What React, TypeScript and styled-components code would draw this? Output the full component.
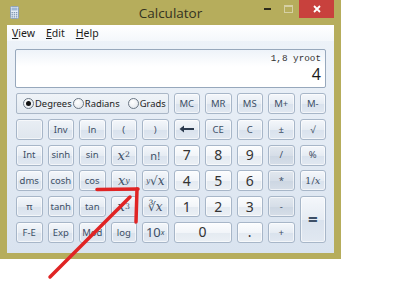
import React from 'react';
import styled, { createGlobalStyle, css } from 'styled-components';

const Global = createGlobalStyle`
  html, body { margin: 0; padding: 0; background: #ffffff; }
  body { width: 403px; height: 300px; overflow: hidden; font-family: "Noto Sans", "Open Sans", sans-serif; }
  * { box-sizing: border-box; }
`;

const Page = styled.div`
  position: relative;
  width: 403px;
  height: 300px;
  background: #ffffff;
`;

const Window = styled.div`
  width: 341px;
  height: 259px;
  background: #b6ad5c;
  display: flex;
  flex-direction: column;
  padding: 0 7px 6px 7px;
`;

const TitleBar = styled.div`
  height: 25px;
  display: grid;
  grid-template-columns: 1fr auto 1fr;
  align-items: center;
`;

const TitleIcon = styled.div`
  display: flex;
  align-items: center;
  padding-left: 3px;
`;

const TitleText = styled.div`
  font-family: "Open Sans", "Noto Sans", sans-serif;
  font-size: 13.5px;
  color: #34321f;
`;

const Controls = styled.div`
  align-self: start;
  display: flex;
  justify-content: flex-end;
  height: 18px;
`;

const CtrlBox = styled.div<{ $w: number; $danger?: boolean }>`
  width: ${p => p.$w}px;
  height: 18px;
  display: flex;
  align-items: center;
  justify-content: center;
  background: ${p => (p.$danger ? '#c8413d' : 'transparent')};
`;

const Client = styled.div`
  flex: 1;
  display: flex;
  flex-direction: column;
  background: linear-gradient(#eef3f9, #d9e3ef);
`;

const MenuBar = styled.div`
  height: 16px;
  display: flex;
  align-items: center;
  gap: 11px;
  padding-left: 5px;
  background: linear-gradient(#ffffff, #f4f7fb);
`;

const MenuItem = styled.span`
  font-family: "Noto Sans", sans-serif;
  font-size: 10.5px;
  color: #1b1b1b;
  u { text-decoration: underline; text-underline-offset: 1px; }
`;

const Body = styled.div`
  flex: 1;
  display: flex;
  flex-direction: column;
  padding: 8px 8px 10px 8px;
`;

const Display = styled.div`
  height: 39px;
  border: 1px solid #97a8bc;
  border-radius: 2px;
  background: linear-gradient(#eef3f9, #ffffff 45%);
  display: flex;
  flex-direction: column;
  align-items: flex-end;
  padding: 4px 4px 0 0;
`;

const Expr = styled.div`
  font-family: "Liberation Mono", "DejaVu Sans Mono", monospace;
  font-size: 9.3px;
  line-height: 10px;
  color: #333;
`;

const Value = styled.div`
  font-family: "Open Sans", "Noto Sans", sans-serif;
  font-size: 16px;
  line-height: 20px;
  color: #1a1a1a;
`;

const Keypad = styled.div`
  margin: 5px 0 0 1px;
  display: grid;
  grid-template-columns: repeat(10, 1fr);
  grid-template-rows: repeat(6, 21px);
  column-gap: 5px;
  row-gap: 4.8px;
`;

const RadioGroup = styled.div`
  grid-column: 1 / span 5;
  border: 1px solid #aab7c7;
  border-radius: 2px;
  background: linear-gradient(#f0f4f8, #e2e9f1);
  display: flex;
  align-items: center;
  padding-left: 6px;
`;

const RadioItem = styled.label<{ $w: number }>`
  width: ${p => p.$w}px;
  display: flex;
  align-items: center;
  gap: 1px;
  font-family: "Noto Sans", sans-serif;
  font-size: 9.4px;
  color: #222;
`;

const RadioDot = styled.span<{ $on?: boolean }>`
  width: 11px;
  height: 11px;
  border-radius: 50%;
  border: 1px solid #6b7785;
  background: radial-gradient(circle at 40% 35%, #ffffff, #dfe4ea);
  display: flex;
  align-items: center;
  justify-content: center;
  &::after {
    content: '';
    width: 5px;
    height: 5px;
    border-radius: 50%;
    background: ${p => (p.$on ? '#111' : 'transparent')};
  }
`;

type Variant = 'fn' | 'num' | 'op' | 'blank';

const variantStyle = {
  fn: css`
    background: linear-gradient(#f4f7fb, #e6ecf3 50%, #d9e2ed 51%, #e1e8f1);
    color: #3d4f66;
  `,
  num: css`
    background: linear-gradient(#fcfdfe, #f2f5f9 50%, #e4eaf1 51%, #ebf0f5);
    color: #333;
  `,
  op: css`
    background: linear-gradient(#e2e8ef, #d6dee8 50%, #ccd6e2 51%, #d6dee8);
    color: #3d4f66;
  `,
  blank: css`
    background: linear-gradient(#e9eef4, #dfe6ee);
    color: #3d4f66;
  `,
};

const Key = styled.div<{ $v: Variant; $size: number; $col?: string; $row?: string; $math?: boolean; $bold?: boolean }>`
  grid-column: ${p => p.$col ?? 'auto'};
  grid-row: ${p => p.$row ?? 'auto'};
  border: 1px solid #a7b6c8;
  border-radius: 3px;
  display: flex;
  align-items: center;
  justify-content: center;
  font-family: ${p => (p.$math ? '"DejaVu Serif", "Liberation Serif", serif' : '"Noto Sans", "Open Sans", sans-serif')};
  font-size: ${p => p.$size}px;
  font-weight: ${p => (p.$bold ? 700 : 400)};
  line-height: 1;
  white-space: nowrap;
  box-shadow: inset 0 0 0 1px rgba(255, 255, 255, 0.6);
  ${p => variantStyle[p.$v]}
  i { font-style: italic; }
  sup { font-size: 0.6em; vertical-align: 0.55em; line-height: 0; }
`;

const Overlay = styled.svg`
  position: absolute;
  left: 0;
  top: 0;
  width: 403px;
  height: 300px;
  pointer-events: none;
`;

type K = { l: React.ReactNode; v?: Variant; s?: number; m?: boolean; b?: boolean; col?: string; row?: string };

const X = () => <i>x</i>;

const BackArrow = () => (
  <svg width="16" height="8" viewBox="0 0 16 8">
    <path d="M15 4 H3" stroke="#2b3a4e" strokeWidth="2" />
    <path d="M0.5 4 L5 0.5 V7.5 Z" fill="#2b3a4e" />
  </svg>
);

const keys: K[] = [
  { l: 'MC' }, { l: 'MR' }, { l: 'MS' }, { l: 'M+' }, { l: 'M-' },
  { l: '', v: 'blank' }, { l: 'Inv' }, { l: 'ln' }, { l: '(' }, { l: ')' },
  { l: <BackArrow /> }, { l: 'CE' }, { l: 'C' }, { l: '\u00b1' }, { l: '\u221a' },
  { l: 'Int' }, { l: 'sinh' }, { l: 'sin' }, { l: <><X /><sup>2</sup></>, m: true, s: 13 }, { l: 'n!', s: 11 },
  { l: '7', v: 'num', s: 14 }, { l: '8', v: 'num', s: 14 }, { l: '9', v: 'num', s: 14 }, { l: '/', v: 'op' }, { l: '%' },
  { l: 'dms' }, { l: 'cosh' }, { l: 'cos' }, { l: <><X /><sup><i>y</i></sup></>, m: true, s: 13 }, { l: <><sup><i>y</i></sup>{'\u221a'}<X /></>, m: true, s: 12 },
  { l: '4', v: 'num', s: 14 }, { l: '5', v: 'num', s: 14 }, { l: '6', v: 'num', s: 14 }, { l: '*', v: 'op' }, { l: <>1/<X /></>, m: true, s: 10 },
  { l: '\u03c0' }, { l: 'tanh' }, { l: 'tan' }, { l: <><X /><sup>3</sup></>, m: true, s: 13 }, { l: <>{'\u221b'}<X /></>, m: true, s: 12 },
  { l: '1', v: 'num', s: 14 }, { l: '2', v: 'num', s: 14 }, { l: '3', v: 'num', s: 14 }, { l: '-', v: 'op' }, { l: '=', s: 17, b: true, row: '5 / span 2', col: '10' },
  { l: 'F-E' }, { l: 'Exp' }, { l: 'Mod' }, { l: 'log' }, { l: <>10<sup><i>x</i></sup></>, s: 13 },
  { l: '0', v: 'num', s: 14, col: '6 / span 2' }, { l: '.', v: 'num', s: 14 }, { l: '+' },
];

const CalcIcon = () => (
  <svg width="9" height="13" viewBox="0 0 9 13">
    <rect x="0.5" y="0.5" width="8" height="12" rx="1" fill="#e6eef7" stroke="#8ea3bb" />
    <rect x="1.5" y="1.5" width="6" height="3" fill="#9fb7d3" />
    {[0, 1, 2].map(r => [0, 1, 2].map(c => (
      <rect key={`${r}${c}`} x={1.5 + c * 2.2} y={6 + r * 2.1} width="1.4" height="1.3" fill="#7f95b0" />
    )))}
  </svg>
);

export default function App() {
  return (
    <Page>
      <Global />
      <Window>
        <TitleBar>
          <TitleIcon><CalcIcon /></TitleIcon>
          <TitleText>Calculator</TitleText>
          <Controls>
            <CtrlBox $w={22}>
              <svg width="7" height="2"><rect width="7" height="2" fill="#2d2b1c" /></svg>
            </CtrlBox>
            <CtrlBox $w={21}>
              <svg width="9" height="8" viewBox="0 0 9 8">
                <rect x="0.5" y="0.5" width="8" height="7" fill="none" stroke="#d6d0a4" />
                <rect x="0.5" y="0.5" width="8" height="1.5" fill="#d6d0a4" />
              </svg>
            </CtrlBox>
            <CtrlBox $w={35} $danger>
              <svg width="8" height="8" viewBox="0 0 8 8">
                <path d="M1 1 L7 7 M7 1 L1 7" stroke="#ffffff" strokeWidth="1.8" />
              </svg>
            </CtrlBox>
          </Controls>
        </TitleBar>
        <Client>
          <MenuBar>
            <MenuItem><u>V</u>iew</MenuItem>
            <MenuItem><u>E</u>dit</MenuItem>
            <MenuItem><u>H</u>elp</MenuItem>
          </MenuBar>
          <Body>
            <Display>
              <Expr>1,8 yroot</Expr>
              <Value>4</Value>
            </Display>
            <Keypad>
              <RadioGroup>
                <RadioItem $w={50}><RadioDot $on />Degrees</RadioItem>
                <RadioItem $w={55}><RadioDot />Radians</RadioItem>
                <RadioItem $w={40}><RadioDot />Grads</RadioItem>
              </RadioGroup>
              {keys.map((k, i) => (
                <Key key={i} $v={k.v ?? 'fn'} $size={k.s ?? 9.5} $math={k.m} $bold={k.b} $col={k.col} $row={k.row}>
                  {k.l}
                </Key>
              ))}
            </Keypad>
          </Body>
        </Client>
      </Window>
      <Overlay viewBox="0 0 403 300">
        <g stroke="#e02424" strokeWidth="3.5" strokeLinecap="round" fill="none">
          <path d="M97 189.5 L138 189" />
          <path d="M137 189 L136 222" />
          <path d="M130 197 L50 277" />
        </g>
      </Overlay>
    </Page>
  );
}
